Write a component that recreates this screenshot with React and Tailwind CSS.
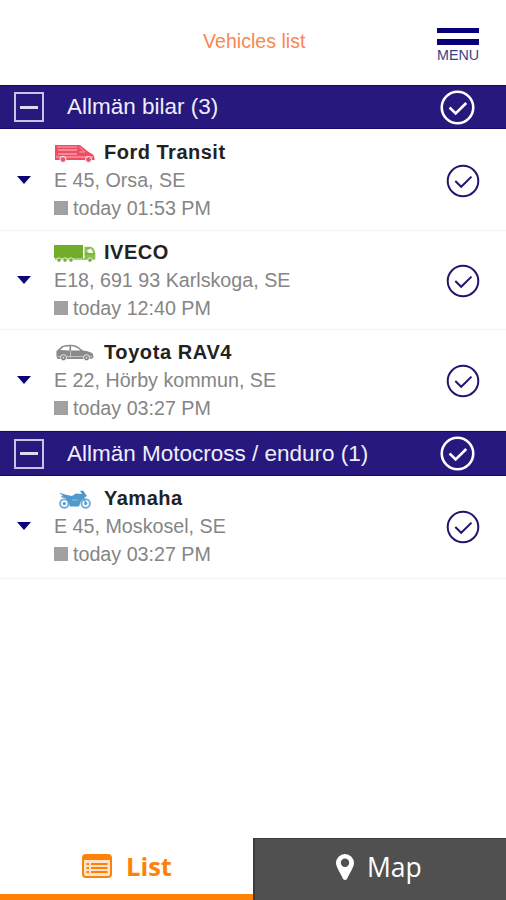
const SANS = 'font-["Liberation_Sans",Arial,sans-serif]';

function CheckCircle({ className, width }) {
  return (
    <svg viewBox="0 0 34 34" className={className} fill="none" stroke="currentColor" strokeWidth={width}>
      <circle cx="17" cy="17" r="15.3" />
      <path d="M9.3 17 L15.2 22.8 L25.5 12.6" />
    </svg>
  );
}

function Van() {
  return (
    <svg viewBox="0 0 40 19" className="block h-[19px] w-10">
      <path d="M0 1H25L33 7.5L38 10.5Q39.5 12 39.5 16H0Z" fill="#f04c62" />
      <path d="M2 3H22M24.5 3.2L30 8H24.5" stroke="#f9a5b0" strokeWidth="1" fill="none" />
      <path d="M3 6H22M3 10H22" stroke="#fff" strokeWidth="1" opacity=".7" />
      <path d="M1 13H38" stroke="#fbb8c0" strokeWidth="1" />
      <g fill="#f0566b" stroke="#fff" strokeWidth="1">
        <circle cx="8" cy="15.5" r="3" />
        <circle cx="33.5" cy="15.5" r="3" />
      </g>
    </svg>
  );
}

function Truck() {
  return (
    <svg viewBox="0 0 42 19" className="block h-[19px] w-[42px]">
      <path d="M0 1H29V14H0Z" fill="#72ac2b" />
      <path d="M30.5 2.8H37Q40 3.5 41.3 9V15.5H30.5Z" fill="#8dbd55" />
      <path d="M32.5 6.8L36.5 4.5Q38.5 5.5 39.2 9H35Z" fill="#f6faef" />
      <path d="M30.5 10H41" stroke="#72ac2b" />
      <path d="M1 15H40" stroke="#8dbd55" strokeWidth="1.5" />
      <g fill="#72ac2b" stroke="#fff" strokeWidth=".8">
        <circle cx="5" cy="16" r="2.2" />
        <circle cx="11" cy="16" r="2.2" />
        <circle cx="17" cy="16" r="2.2" />
        <circle cx="36" cy="16" r="2.2" />
      </g>
    </svg>
  );
}

function Car() {
  return (
    <svg viewBox="0 0 40 19" className="block h-[19px] w-10">
      <path d="M1.5 7L7 2Q16-.5 22 2L28 6.5Q36 7.5 38 10L38.5 13.5Q37 15 34 15H3Q1 14 1.5 7Z" fill="#8a8a8a" />
      <path d="M5 6L8.5 3L14.5 2.3V6.5ZM16 2.3Q20 2 25.5 6.5H16Z" fill="#fff" />
      <path d="M15.5 7V14M3 12.5H37" stroke="#d0d0d0" strokeWidth=".8" fill="none" />
      <g fill="#777" stroke="#fff" strokeWidth=".9">
        <circle cx="8.5" cy="13.7" r="3" />
        <circle cx="31.5" cy="13.7" r="3" />
      </g>
      <g fill="#ddd">
        <circle cx="8.5" cy="13.7" r="1.1" />
        <circle cx="31.5" cy="13.7" r="1.1" />
      </g>
    </svg>
  );
}

function Motorcycle() {
  return (
    <svg viewBox="0 0 32 19" className="block h-[19px] w-8">
      <g fill="none" stroke="#75b0d9" strokeWidth="2">
        <circle cx="5.3" cy="13.5" r="4.2" />
        <circle cx="26.7" cy="13.5" r="4.2" />
      </g>
      <g fill="#4f99cd">
        <circle cx="5.3" cy="13.5" r="1.6" />
        <circle cx="26.7" cy="13.5" r="1.6" />
        <path d="M0 2.5L6 4.5L13 6L17 3.5L23 4L21 1L24 .5L28 6L25 8L22 11L20 16.5H11L9 11L6 8L1 7L4 6Z" />
      </g>
      <path d="M23 5L27 13" stroke="#4f99cd" strokeWidth="1.3" />
      <path d="M13 10H19" stroke="#91c1e2" />
    </svg>
  );
}

function GroupBar({ title, className }) {
  return (
    <div className={`flex shrink-0 items-center border-y border-[#120a68] bg-[#26187d] pl-[14px] text-[#f0eefa] ${className}`}>
      <div className="flex h-[30px] w-[30px] items-center justify-center border-2 border-[#c8c3e6]">
        <div className="h-[3px] w-[18px] bg-[#dedaf2]" />
      </div>
      <div className="ml-[23px] flex-1 whitespace-nowrap text-[22.5px] leading-[26px]">{title}</div>
      <CheckCircle className="mr-[31px] h-[35px] w-[35px] text-white" width="2.5" />
    </div>
  );
}

function VehicleRow({ icon, name, place, time, className, nameClass }) {
  return (
    <div className={`flex shrink-0 items-start border-b border-[#f3f3f3] ${className}`}>
      <svg viewBox="0 0 14 8" className="ml-[17px] mt-[45px] h-2 w-[14px] shrink-0">
        <path d="M0 0H14L7 8Z" fill="#0b0478" />
      </svg>
      <div className="ml-[23px] flex-1 whitespace-nowrap pt-[7px] text-[#858585]">
        <div className="flex h-7 items-center">
          <div className="flex w-[42px] justify-center pt-[2px]">{icon}</div>
          <div className={`ml-[8px] text-[20px] font-bold text-[#222] ${nameClass}`}>{name}</div>
        </div>
        <div className="h-7 text-[19.7px] leading-7">{place}</div>
        <div className="flex h-7 items-center">
          <div className="h-[14px] w-[14px] bg-[#a1a1a1]" />
          <div className="ml-[5px] text-[19.7px] leading-7">{time}</div>
        </div>
      </div>
      <CheckCircle className="mr-[26px] mt-[33px] h-[34px] w-[34px] shrink-0 text-[#211570]" width="2" />
    </div>
  );
}

export default function App() {
  return (
    <div className={`flex h-[900px] w-[506px] flex-col overflow-hidden bg-white ${SANS}`}>
      <header className="grid h-[85px] shrink-0 grid-cols-[1fr_104px_1fr]">
        <div className="col-start-2 whitespace-nowrap pl-[2px] pt-[27px] text-[19.6px] leading-7 text-[#fb8650]">Vehicles list</div>
        <div className="mr-[27px] w-[42px] justify-self-end pt-[28px] text-[#3b3f83]">
          <div className="h-[5px] bg-[#080078]" />
          <div className="mt-[6px] h-[6px] bg-[#080078]" />
          <div className="mt-[2px] whitespace-nowrap text-[14.3px] leading-4">MENU</div>
        </div>
      </header>

      <main className="flex flex-1 flex-col">
        <GroupBar title="Allmän bilar (3)" className="h-[44px]" />
        <VehicleRow icon={<Van />} name="Ford Transit" place="E 45, Orsa, SE" time="today 01:53 PM" className="h-[102px] pt-[2px]" nameClass="tracking-[0.5px]" />
        <VehicleRow icon={<Truck />} name="IVECO" place="E18, 691 93 Karlskoga, SE" time="today 12:40 PM" className="h-[99px]" nameClass="tracking-[0.5px]" />
        <VehicleRow icon={<Car />} name="Toyota RAV4" place="E 22, Hörby kommun, SE" time="today 03:27 PM" className="h-[101px] pt-px" nameClass="tracking-[0.6px]" />
        <GroupBar title="Allmän Motocross / enduro (1)" className="h-[45px]" />
        <VehicleRow icon={<Motorcycle />} name="Yamaha" place="E 45, Moskosel, SE" time="today 03:27 PM" className="h-[103px] pt-px" nameClass="tracking-[0.5px]" />
      </main>

      <nav className='flex h-[62px] shrink-0 font-["Open_Sans",sans-serif]'>
        <div className="flex w-[253px] items-center border-b-[6px] border-[#ff8200] pl-[82px] text-[#ff8208]">
          <svg viewBox="0 0 30 24" className="h-6 w-[30px]">
            <rect x="1" y="1" width="28" height="22" rx="3" fill="#ffe3cc" stroke="currentColor" strokeWidth="2" />
            <path d="M1 6V3Q1 1 3 1H27Q29 1 29 3V6Z" fill="currentColor" />
            <path d="M4.5 10H7M9 10H25.5M4.5 14H7M9 14H25.5M4.5 18H7M9 18H25.5" stroke="currentColor" strokeWidth="2" />
          </svg>
          <div className="ml-[14px] text-[25.5px] font-bold leading-8">List</div>
        </div>
        <div className="flex flex-1 items-center border-l-2 border-t border-[#3c3c3c] bg-[#505050] pb-[5px] pl-[81px] text-white">
          <svg viewBox="0 0 18 26" className="h-[26px] w-[18px]">
            <path fillRule="evenodd" fill="currentColor" d="M9 0A9 9 0 0 1 18 9C18 13 13 20 11 25Q9 27 7 25C5 20 0 13 0 9A9 9 0 0 1 9 0ZM9 4.5A4.2 4.2 0 1 0 9 12.9A4.2 4.2 0 0 0 9 4.5Z" />
          </svg>
          <div className="ml-[13px] text-[26.5px] font-medium leading-8">Map</div>
        </div>
      </nav>
    </div>
  );
}
